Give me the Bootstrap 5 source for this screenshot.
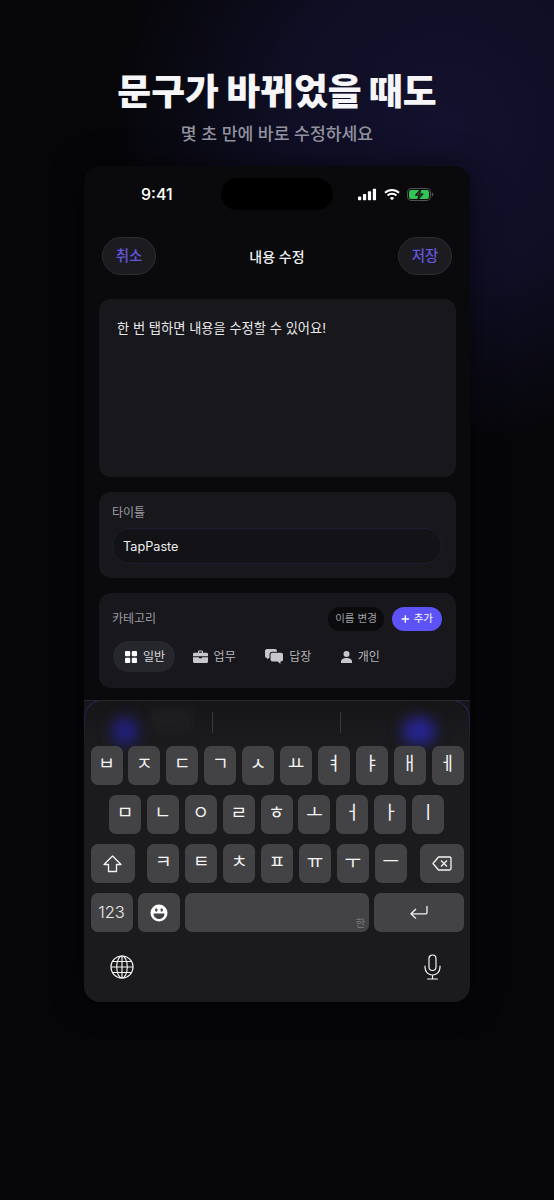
<!DOCTYPE html>
<html lang="ko">
<head>
<meta charset="utf-8">
<title>TapPaste</title>
<link href="https://cdn.jsdelivr.net/npm/bootstrap@5.3.0/dist/css/bootstrap.min.css" rel="stylesheet">
<style>
html,body{height:100%}
body{width:554px;height:1200px;overflow:hidden;margin:0;color:#fff;
 font-family:"Inter","Noto Sans CJK KR",sans-serif;
 background:radial-gradient(ellipse 330px 320px at 445px 125px,#13112d 0%,#0f0e24 50%,rgba(7,7,10,0) 100%),#060609}
.headline{padding-top:67px;height:166px;text-align:center}
.headline h1{font-size:36.8px;line-height:50px;font-weight:900;margin:0;color:#f6f6f8}
.headline p{font-size:17.2px;line-height:24px;font-weight:500;color:#92929f;margin:5px 0 0}
.phone{width:386px;height:836px;margin-left:84px;border-radius:16px;background:#0a0a0d;overflow:hidden;box-shadow:0 0 30px rgba(0,0,0,.5)}
.status{height:58px;padding:0 36px 2px 57px;position:relative}
.clock{font-size:16px;font-weight:500;width:60px}
.island{width:112px;height:32px;border-radius:16px;background:#000;position:absolute;left:137px;top:12px}
.icons{gap:7px}
.navline{height:38px;margin:13px 18px 0 18px}
.pill{width:54px;height:38px;border-radius:19px;background:#1c1c20;border:1px solid #2d2d31;color:#6156dd;font-size:14.5px;font-weight:500;line-height:1;padding:0}
.navtitle{font-size:14px;font-weight:500;color:#f2f2f4}
.panel{background:#17171c;border-radius:12px;margin:0 14px 0 15px}
.editor{height:178px;margin-top:24px;padding:19px 18px;font-size:13.25px;line-height:20px;color:#e8e8ea}
.titlebox{height:86px;margin-top:15px;padding:12px 14px 0 13px}
.lbl{font-size:12px;line-height:18px;color:#9c9ca2}
.field{height:36px;margin-top:6px;border-radius:18px;background:#131317;border:1px solid #1e1d33;padding:1px 10px 0;font-size:12.7px;color:#eee}
.catbox{height:95px;margin-top:15px;padding:14px 14px 0 13px}
.chip{height:24px;border-radius:12px;font-size:10.5px;padding:0 9px;white-space:nowrap}
.chip-dark{background:#0b0b0e;color:#a0a0a4;width:56px;justify-content:center}
.chip-add{background:#5c52f5;color:#fff;width:50px;justify-content:center;gap:4px;font-weight:400}
.tabs{margin-top:10px;margin-left:1px;gap:5.5px}
.tabi{height:31px;border-radius:16px;font-size:12px;color:#b4b4b8;gap:6px;padding:0 12px;white-space:nowrap}
.tabi.on{background:#26272c;color:#d8d8dc;padding-right:10px}
.kb{height:302px;margin-top:12px;background:linear-gradient(#161618 0,#1b1b1d 46px);border-top:1px solid #29292b;position:relative;overflow:hidden;padding:0 6px}
.arc{position:absolute;left:0;right:0;top:-1px;height:44px;border:1px solid #2d2b7a;border-bottom:0;border-radius:18px 18px 0 0;
 -webkit-mask-image:linear-gradient(#000,transparent),linear-gradient(90deg,#000 0,transparent 16%,transparent 84%,#000 100%);
 mask-image:linear-gradient(#000,transparent),linear-gradient(90deg,#000 0,transparent 16%,transparent 84%,#000 100%);
 -webkit-mask-composite:source-in;mask-composite:intersect}
.glow{position:absolute;top:16px;width:26px;height:28px;border-radius:50%;background:#23207f;filter:blur(7px)}
.glow-a{left:28px}.glow-b{left:318px;width:34px;background:#272490}
.ghost{position:absolute;left:66px;top:8px;width:42px;height:24px;background:#1e1e20;filter:blur(4px)}
.sugg{height:45px;padding-top:11px;position:relative}
.sepv{width:1px;height:21px;background:#39393c}
.sep-a{margin-left:122px}.sep-b{margin-left:127px}
.keyline{gap:5.9px;height:39px;margin-bottom:10px}
.ky{width:32px;height:39px;border-radius:7px;background:#434345;color:#f4f4f4;font-size:18px;line-height:1;flex:none;padding-bottom:3px}
.ky.wide{width:44px;padding:0}
.ky.num{width:42px;padding:0;font-size:16.5px;font-weight:300;color:#e8e8e8}
.ky.spc{width:184px;position:relative;margin-left:-1px}
.ky.ret{width:90px;padding:0;margin-left:-1px}
.hanmark{position:absolute;right:4px;bottom:3px;font-size:10.5px;color:#7a7a7c}
.line-two{margin-left:18.5px}
.gapx{margin-left:7px}
.keys{padding-left:.5px;position:relative}
.foot{padding:12px 23px 0 20px}
</style>
</head>
<body>
<header class="headline">
 <h1>문구가 바뀌었을 때도</h1>
 <p>몇 초 만에 바로 수정하세요</p>
</header>
<main class="phone d-flex flex-column">
 <div class="status d-flex align-items-center justify-content-between">
  <span class="clock">9:41</span>
  <span class="island"></span>
  <span class="icons d-flex align-items-center">
   <svg width="19" height="13" viewBox="0 0 20 13" fill="#fff"><rect x="0" y="8.500" width="3.400" height="4" rx=".8"/><rect x="5.200" y="6" width="3.400" height="6.500" rx=".8"/><rect x="10.400" y="3.200" width="3.400" height="9.300" rx=".8"/><rect x="15.600" y=".5" width="3.400" height="12" rx=".8"/></svg>
   <svg width="16" height="13" viewBox="0 0 16 13" fill="none" stroke="#fff" stroke-width="2"><path d="M1 4.800a10 10 0 0 1 14 0"/><path d="M3.600 7.500a6.400 6.400 0 0 1 8.800 0"/><path d="M8 12.300 5.900 10a3 3 0 0 1 4.200 0z" fill="#fff" stroke="none"/></svg>
   <svg width="27" height="13" viewBox="0 0 27 13"><rect x=".5" y=".5" width="23" height="12" rx="3.600" fill="none" stroke="#505450"/><rect x="2" y="2" width="20" height="9" rx="2.200" fill="#30c655"/><path d="M24.800 4.400c1 .3 1.600 1.100 1.600 2.100s-.6 1.800-1.600 2.100z" fill="#505450"/><path d="M13.800 1.200 8.600 7.200h3.400L10.600 12l5.400-6h-3.400z" fill="#4a4f4a" stroke="#0c100c" stroke-width="1.100" stroke-linejoin="round"/></svg>
  </span>
 </div>
 <div class="navline d-flex align-items-center justify-content-between">
  <button type="button" class="pill btn">취소</button>
  <span class="navtitle">내용 수정</span>
  <button type="button" class="pill btn">저장</button>
 </div>
 <section class="panel editor">한 번 탭하면 내용을 수정할 수 있어요!</section>
 <section class="panel titlebox">
  <div class="lbl">타이틀</div>
  <div class="field d-flex align-items-center">TapPaste</div>
 </section>
 <section class="panel catbox">
  <div class="d-flex align-items-center justify-content-between">
   <span class="lbl">카테고리</span>
   <span class="d-flex gap-2">
    <span class="chip chip-dark d-flex align-items-center">이름 변경</span>
    <span class="chip chip-add d-flex align-items-center"><svg width="10" height="10" viewBox="0 0 10 10" stroke="#fff" stroke-width="1.600"><path d="M5 .8v8.400M.8 5h8.400"/></svg>추가</span>
   </span>
  </div>
  <div class="tabs d-flex">
   <span class="tabi on d-flex align-items-center"><svg width="12" height="12" viewBox="0 0 12 12" fill="#fff"><rect width="5.200" height="5.200" rx="1"/><rect x="6.800" width="5.200" height="5.200" rx="1"/><rect y="6.800" width="5.200" height="5.200" rx="1"/><rect x="6.800" y="6.800" width="5.200" height="5.200" rx="1"/></svg>일반</span>
   <span class="tabi d-flex align-items-center"><svg width="15" height="13" viewBox="0 0 15 13" fill="#c8c8cc"><path d="M5 3V1.600C5 .9 5.500.4 6.200.4h2.600c.7 0 1.200.5 1.200 1.200V3H8.900V1.500H6.100V3z"/><path d="M1.500 2.700h12c.8 0 1.500.6 1.500 1.400V6.200H0V4.100c0-.8.700-1.400 1.500-1.400zM0 7.200h6v1h3v-1h6v4.300c0 .8-.7 1.500-1.500 1.500h-12C.7 13 0 12.300 0 11.500z"/></svg>업무</span>
   <span class="tabi d-flex align-items-center"><svg width="18" height="15" viewBox="0 0 18 15" fill="#c8c8cc"><path d="M2 0h8c1.100 0 2 .9 2 2v.8H7.500A3 3 0 0 0 4.500 5.800V9H4l-1.800 1.500V9A2 2 0 0 1 0 7V2C0 .9.900 0 2 0z"/><path d="M7.500 3.800H16c1.100 0 2 .9 2 2v4.700c0 1.100-.9 2-2 2h-.6V15l-2.700-2.500H7.500a2 2 0 0 1-2-2V5.800c0-1.100.9-2 2-2z"/></svg>답장</span>
   <span class="tabi d-flex align-items-center"><svg width="11" height="12" viewBox="0 0 11 12" fill="#c8c8cc"><circle cx="5.500" cy="3" r="3"/><path d="M0 12V10.500C0 8.500 2.500 7 5.500 7S11 8.500 11 10.500V12z"/></svg>개인</span>
  </div>
 </section>
 <section class="kb">
  <span class="arc"></span><span class="ghost"></span>
  <span class="glow glow-a"></span><span class="glow glow-b"></span>
  <div class="sugg d-flex"><span class="sepv sep-a"></span><span class="sepv sep-b"></span></div>
  <div class="keys">
   <div class="keyline d-flex">
    <span class="ky d-flex align-items-center justify-content-center">ㅂ</span><span class="ky d-flex align-items-center justify-content-center">ㅈ</span><span class="ky d-flex align-items-center justify-content-center">ㄷ</span><span class="ky d-flex align-items-center justify-content-center">ㄱ</span><span class="ky d-flex align-items-center justify-content-center">ㅅ</span><span class="ky d-flex align-items-center justify-content-center">ㅛ</span><span class="ky d-flex align-items-center justify-content-center">ㅕ</span><span class="ky d-flex align-items-center justify-content-center">ㅑ</span><span class="ky d-flex align-items-center justify-content-center">ㅐ</span><span class="ky d-flex align-items-center justify-content-center">ㅔ</span>
   </div>
   <div class="keyline d-flex line-two">
    <span class="ky d-flex align-items-center justify-content-center">ㅁ</span><span class="ky d-flex align-items-center justify-content-center">ㄴ</span><span class="ky d-flex align-items-center justify-content-center">ㅇ</span><span class="ky d-flex align-items-center justify-content-center">ㄹ</span><span class="ky d-flex align-items-center justify-content-center">ㅎ</span><span class="ky d-flex align-items-center justify-content-center">ㅗ</span><span class="ky d-flex align-items-center justify-content-center">ㅓ</span><span class="ky d-flex align-items-center justify-content-center">ㅏ</span><span class="ky d-flex align-items-center justify-content-center">ㅣ</span>
   </div>
   <div class="keyline d-flex">
    <span class="ky wide d-flex align-items-center justify-content-center"><svg width="19" height="18" viewBox="0 0 19 18" fill="none" stroke="#f4f4f4" stroke-width="1.300" stroke-linejoin="round"><path d="M9.500 1 1 9.500h4.500V16.500h8V9.500H18z"/></svg></span>
    <span class="ky gapx d-flex align-items-center justify-content-center">ㅋ</span><span class="ky d-flex align-items-center justify-content-center">ㅌ</span><span class="ky d-flex align-items-center justify-content-center">ㅊ</span><span class="ky d-flex align-items-center justify-content-center">ㅍ</span><span class="ky d-flex align-items-center justify-content-center">ㅠ</span><span class="ky d-flex align-items-center justify-content-center">ㅜ</span><span class="ky d-flex align-items-center justify-content-center">ㅡ</span>
    <span class="ky wide gapx d-flex align-items-center justify-content-center"><svg width="20" height="15" viewBox="0 0 20 15" fill="none" stroke="#f4f4f4" stroke-width="1.300" stroke-linejoin="round"><path d="M6.500 1H17.500c.8 0 1.500.7 1.500 1.500v10c0 .8-.7 1.500-1.500 1.500H6.500L1 7.500z"/><path d="m9 4.500 6 6M15 4.500l-6 6"/></svg></span>
   </div>
   <div class="keyline d-flex">
    <span class="ky num d-flex align-items-center justify-content-center">123</span>
    <span class="ky num d-flex align-items-center justify-content-center"><svg width="18" height="18" viewBox="0 0 18 18"><circle cx="9" cy="9" r="8.500" fill="#fff"/><ellipse cx="6.300" cy="6" rx="1.200" ry="1.700" fill="#434345"/><ellipse cx="11.700" cy="6" rx="1.200" ry="1.700" fill="#434345"/><path d="M3.500 9.500h11c0 3.200-2.500 5.500-5.500 5.500s-5.500-2.300-5.500-5.500z" fill="#434345"/></svg></span>
    <span class="ky spc d-flex"><span class="hanmark">한</span></span>
    <span class="ky ret d-flex align-items-center justify-content-center"><svg width="18" height="15" viewBox="0 0 18 15" fill="none" stroke="#f4f4f4" stroke-width="1.300" stroke-linejoin="round"><path d="M17 1v6.500c0 .8-.5 1.300-1.300 1.300H1.500"/><path d="M6 4 1 8.800l5 4.800"/></svg></span>
   </div>
  </div>
  <div class="foot d-flex justify-content-between align-items-center">
   <svg width="24" height="24" viewBox="0 0 25 25" fill="none" stroke="#f4f4f4" stroke-width="1.200"><circle cx="12.500" cy="12.500" r="11.500"/><ellipse cx="12.500" cy="12.500" rx="5.500" ry="11.500"/><path d="M12.500 1v23M1 12.500h23M2.700 6.800h19.600M2.700 18.200h19.600"/></svg>
   <svg width="17" height="26" viewBox="0 0 17 26" fill="none" stroke="#f4f4f4" stroke-width="1.200" stroke-linecap="round"><rect x="5" y="1" width="7" height="15.500" rx="3.500"/><path d="M1 12v1.500a7.500 7.500 0 0 0 15 0V12M8.500 21v4M3.500 25h10"/></svg>
  </div>
 </section>
</main>
<script src="https://cdn.jsdelivr.net/npm/bootstrap@5.3.0/dist/js/bootstrap.bundle.min.js"></script>
</body>
</html>
